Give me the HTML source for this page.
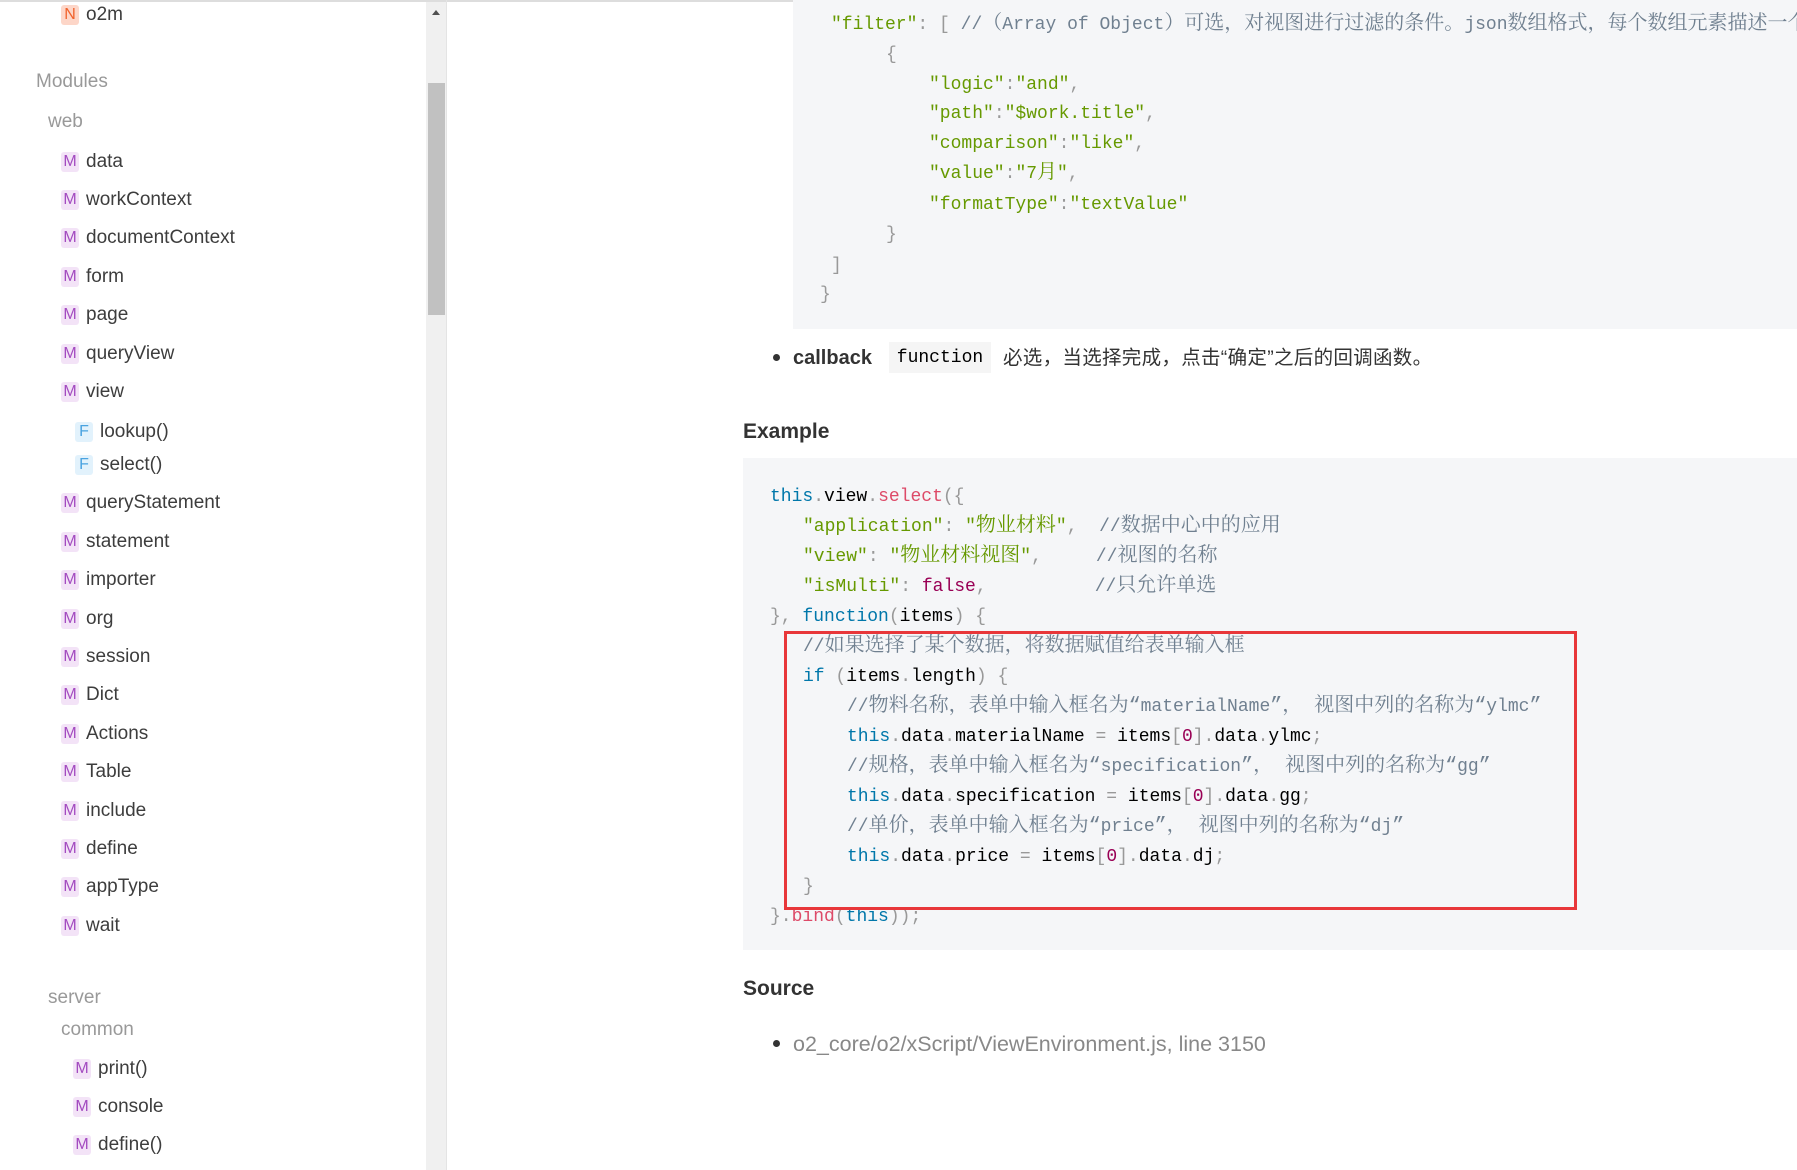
<!DOCTYPE html>
<html><head><meta charset="utf-8"><style>
*{margin:0;padding:0;box-sizing:border-box}
body{width:1797px;height:1170px;overflow:hidden;background:#fff;position:relative;font-family:"Liberation Sans","Noto Sans CJK SC",sans-serif;color:#333}
.abs{position:absolute;white-space:pre}
.sb{font-size:19px;color:#3d3d3d;line-height:24px}
.ic{display:inline-block;width:18px;height:20px;border-radius:3px;font-size:16px;line-height:20px;text-align:center;margin-right:7px;vertical-align:1px}
.m{background:#f3e3f7;color:#a34bc0}
.f{background:#e2f2fc;color:#4aa3e0}
.n{background:#fdd6c8;color:#f0622c}
.cd{font-family:"Liberation Mono","Noto Serif CJK SC",monospace;font-size:18px;line-height:30px;color:#000}
.z{font-size:20px}
.k{color:#0077aa}.s{color:#669900}.p{color:#999}.c{color:#708090}.r{color:#dd4a68}.b{color:#990055}
</style></head><body>
<div class="abs" style="left:0;top:0;width:1797px;height:2px;background:#ddd"></div>
<div class="abs" style="left:426px;top:2px;width:20px;height:1168px;background:#f0f0f0"></div>
<div class="abs" style="left:428px;top:83px;width:17px;height:232px;background:#c1c1c1"></div>
<div class="abs" style="left:432px;top:10px;width:0;height:0;border-left:4px solid transparent;border-right:4px solid transparent;border-bottom:5px solid #505050"></div>
<div class="abs" style="left:446px;top:0;width:1px;height:1170px;background:#e4e4e4"></div>

<div class="abs sb" style="left:61px;top:3px"><span class="ic n">N</span>o2m</div>
<div class="abs sb" style="left:36px;top:70px;color:#999">Modules</div>
<div class="abs sb" style="left:48px;top:110px;color:#999">web</div>
<div class="abs sb" style="left:61px;top:150px"><span class="ic m">M</span>data</div>
<div class="abs sb" style="left:61px;top:188px"><span class="ic m">M</span>workContext</div>
<div class="abs sb" style="left:61px;top:226px"><span class="ic m">M</span>documentContext</div>
<div class="abs sb" style="left:61px;top:265px"><span class="ic m">M</span>form</div>
<div class="abs sb" style="left:61px;top:303px"><span class="ic m">M</span>page</div>
<div class="abs sb" style="left:61px;top:342px"><span class="ic m">M</span>queryView</div>
<div class="abs sb" style="left:61px;top:380px"><span class="ic m">M</span>view</div>
<div class="abs sb" style="left:75px;top:420px"><span class="ic f">F</span>lookup()</div>
<div class="abs sb" style="left:75px;top:453px"><span class="ic f">F</span>select()</div>
<div class="abs sb" style="left:61px;top:491px"><span class="ic m">M</span>queryStatement</div>
<div class="abs sb" style="left:61px;top:530px"><span class="ic m">M</span>statement</div>
<div class="abs sb" style="left:61px;top:568px"><span class="ic m">M</span>importer</div>
<div class="abs sb" style="left:61px;top:607px"><span class="ic m">M</span>org</div>
<div class="abs sb" style="left:61px;top:645px"><span class="ic m">M</span>session</div>
<div class="abs sb" style="left:61px;top:683px"><span class="ic m">M</span>Dict</div>
<div class="abs sb" style="left:61px;top:722px"><span class="ic m">M</span>Actions</div>
<div class="abs sb" style="left:61px;top:760px"><span class="ic m">M</span>Table</div>
<div class="abs sb" style="left:61px;top:799px"><span class="ic m">M</span>include</div>
<div class="abs sb" style="left:61px;top:837px"><span class="ic m">M</span>define</div>
<div class="abs sb" style="left:61px;top:875px"><span class="ic m">M</span>appType</div>
<div class="abs sb" style="left:61px;top:914px"><span class="ic m">M</span>wait</div>
<div class="abs sb" style="left:48px;top:986px;color:#999">server</div>
<div class="abs sb" style="left:61px;top:1018px;color:#999">common</div>
<div class="abs sb" style="left:73px;top:1057px"><span class="ic m">M</span>print()</div>
<div class="abs sb" style="left:73px;top:1095px"><span class="ic m">M</span>console</div>
<div class="abs sb" style="left:73px;top:1133px"><span class="ic m">M</span>define()</div>

<div class="abs" style="left:793px;top:0;width:1004px;height:329px;background:#f5f6f8"></div>
<div class="abs cd" style="left:831px;top:10px"><span class="s">"filter"</span><span class="p">:</span> <span class="p">[</span> <span class="c">//<span class="z">（</span>Array of Object<span class="z">）可选，对视图进行过滤的条件。</span>json<span class="z">数组格式，每个数组元素描述一个</span></span></div>
<div class="abs cd p" style="left:886px;top:40px">{</div>
<div class="abs cd" style="left:929px;top:70px"><span class="s">"logic"</span><span class="p">:</span><span class="s">"and"</span><span class="p">,</span></div>
<div class="abs cd" style="left:929px;top:99px"><span class="s">"path"</span><span class="p">:</span><span class="s">"$work.title"</span><span class="p">,</span></div>
<div class="abs cd" style="left:929px;top:129px"><span class="s">"comparison"</span><span class="p">:</span><span class="s">"like"</span><span class="p">,</span></div>
<div class="abs cd" style="left:929px;top:159px"><span class="s">"value"</span><span class="p">:</span><span class="s">"7<span class="z">月</span>"</span><span class="p">,</span></div>
<div class="abs cd" style="left:929px;top:190px"><span class="s">"formatType"</span><span class="p">:</span><span class="s">"textValue"</span></div>
<div class="abs cd p" style="left:886px;top:220px">}</div>
<div class="abs cd p" style="left:831px;top:251px">]</div>
<div class="abs cd p" style="left:820px;top:280px">}</div>

<div class="abs" style="left:773px;top:354px;width:7px;height:7px;border-radius:50%;background:#333"></div>
<div class="abs" style="left:793px;top:344px;font-size:20px;line-height:28px;font-weight:bold">callback</div>
<div class="abs cd" style="left:889px;top:342px;width:102px;height:31px;background:#f5f5f5;text-align:center;padding-top:1px">function</div>
<div class="abs" style="left:1003px;top:344px;font-size:19.5px;line-height:28px;letter-spacing:0.3px">必选，当选择完成，点击“确定”之后的回调函数。</div>

<div class="abs" style="left:743px;top:418px;font-size:21px;line-height:28px;font-weight:bold">Example</div>

<div class="abs" style="left:743px;top:458px;width:1054px;height:492px;background:#f5f6f8"></div>
<div class="abs cd" style="left:770px;top:482px"><span class="k">this</span><span class="p">.</span>view<span class="p">.</span><span class="r">select</span><span class="p">({</span></div>
<div class="abs cd" style="left:803px;top:512px"><span class="s">"application"</span><span class="p">:</span> <span class="s">"<span class="z">物业材料</span>"</span><span class="p">,</span>  <span class="c">//<span class="z">数据中心中的应用</span></span></div>
<div class="abs cd" style="left:803px;top:542px"><span class="s">"view"</span><span class="p">:</span> <span class="s">"<span class="z">物业材料视图</span>"</span><span class="p">,</span>     <span class="c">//<span class="z">视图的名称</span></span></div>
<div class="abs cd" style="left:803px;top:572px"><span class="s">"isMulti"</span><span class="p">:</span> <span class="b">false</span><span class="p">,</span>          <span class="c">//<span class="z">只允许单选</span></span></div>
<div class="abs cd" style="left:770px;top:602px"><span class="p">},</span> <span class="k">function</span><span class="p">(</span>items<span class="p">)</span> <span class="p">{</span></div>
<div class="abs cd c" style="left:803px;top:632px">//<span class="z">如果选择了某个数据，将数据赋值给表单输入框</span></div>
<div class="abs cd" style="left:803px;top:662px"><span class="k">if</span> <span class="p">(</span>items<span class="p">.</span>length<span class="p">)</span> <span class="p">{</span></div>
<div class="abs cd c" style="left:847px;top:692px">//<span class="z">物料名称，表单中输入框名为“</span>materialName<span class="z">”， 视图中列的名称为“</span>ylmc<span class="z">”</span></div>
<div class="abs cd" style="left:847px;top:722px"><span class="k">this</span><span class="p">.</span>data<span class="p">.</span>materialName <span class="p">=</span> items<span class="p">[</span><span class="b">0</span><span class="p">].</span>data<span class="p">.</span>ylmc<span class="p">;</span></div>
<div class="abs cd c" style="left:847px;top:752px">//<span class="z">规格，表单中输入框名为“</span>specification<span class="z">”， 视图中列的名称为“</span>gg<span class="z">”</span></div>
<div class="abs cd" style="left:847px;top:782px"><span class="k">this</span><span class="p">.</span>data<span class="p">.</span>specification <span class="p">=</span> items<span class="p">[</span><span class="b">0</span><span class="p">].</span>data<span class="p">.</span>gg<span class="p">;</span></div>
<div class="abs cd c" style="left:847px;top:812px">//<span class="z">单价，表单中输入框名为“</span>price<span class="z">”， 视图中列的名称为“</span>dj<span class="z">”</span></div>
<div class="abs cd" style="left:847px;top:842px"><span class="k">this</span><span class="p">.</span>data<span class="p">.</span>price <span class="p">=</span> items<span class="p">[</span><span class="b">0</span><span class="p">].</span>data<span class="p">.</span>dj<span class="p">;</span></div>
<div class="abs cd p" style="left:803px;top:872px">}</div>
<div class="abs cd" style="left:770px;top:902px"><span class="p">}.</span><span class="r">bind</span><span class="p">(</span><span class="k">this</span><span class="p">));</span></div>
<div class="abs" style="left:784px;top:631px;width:793px;height:279px;border:3px solid #e8373a"></div>

<div class="abs" style="left:743px;top:975px;font-size:21px;line-height:28px;font-weight:bold">Source</div>
<div class="abs" style="left:773px;top:1040px;width:7px;height:7px;border-radius:50%;background:#333"></div>
<div class="abs" style="left:793px;top:1030px;font-size:21.5px;line-height:28px;color:#888">o2_core/o2/xScript/ViewEnvironment.js, line 3150</div>
</body></html>
